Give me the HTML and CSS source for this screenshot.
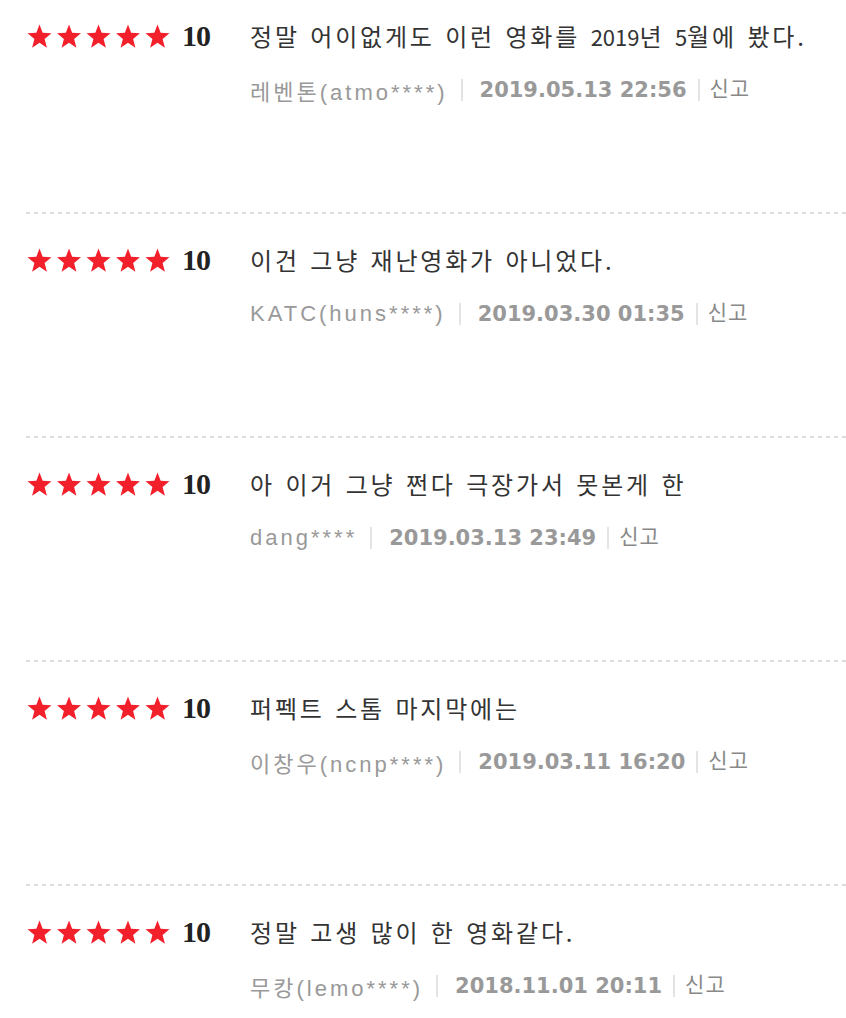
FILE: index.html
```html
<!DOCTYPE html>
<html lang="ko">
<head>
    <meta charset="UTF-8">
    <meta name="viewport" content="width=device-width, initial-scale=1.0">
    <title>관람객 평점</title>
    <link rel="stylesheet" href="styles.css">
</head>
<body>
    <svg class="defs" width="0" height="0">
        <defs>
            <symbol id="star" viewBox="0 0 24 23">
                <polygon points="12,0.5 14.9,8.1 23,8.5 16.7,13.7 18.8,21.8 12,17.3 5.2,21.8 7.3,13.7 1,8.5 9.1,8.1" />
            </symbol>
        </defs>
    </svg>

    <ul class="reviews">
        <li class="review">
            <div class="score">
                <svg class="stars" width="146" height="26" viewBox="0 0 146 26">
                    <use href="#star" x="0" y="1" width="27" height="25" />
                    <use href="#star" x="29.5" y="1" width="27" height="25" />
                    <use href="#star" x="59" y="1" width="27" height="25" />
                    <use href="#star" x="88.5" y="1" width="27" height="25" />
                    <use href="#star" x="118" y="1" width="27" height="25" />
                </svg>
                <em>10</em>
            </div>
            <div class="body">
                <p class="text">정말 어이없게도 이런 영화를 <span class="num">2019</span>년 <span class="num">5</span>월에 봤다.</p>
                <div class="meta">
                    <span class="nick">레벤톤(atmo****)</span>
                    <span class="bar"></span>
                    <span class="date">2019.05.13 22:56</span>
                    <span class="bar short"></span>
                    <a href="#" class="report">신고</a>
                </div>
            </div>
        </li>

        <li class="review">
            <div class="score">
                <svg class="stars" width="146" height="26" viewBox="0 0 146 26">
                    <use href="#star" x="0" y="1" width="27" height="25" />
                    <use href="#star" x="29.5" y="1" width="27" height="25" />
                    <use href="#star" x="59" y="1" width="27" height="25" />
                    <use href="#star" x="88.5" y="1" width="27" height="25" />
                    <use href="#star" x="118" y="1" width="27" height="25" />
                </svg>
                <em>10</em>
            </div>
            <div class="body">
                <p class="text">이건 그냥 재난영화가 아니었다.</p>
                <div class="meta">
                    <span class="nick">KATC(huns****)</span>
                    <span class="bar"></span>
                    <span class="date">2019.03.30 01:35</span>
                    <span class="bar short"></span>
                    <a href="#" class="report">신고</a>
                </div>
            </div>
        </li>

        <li class="review">
            <div class="score">
                <svg class="stars" width="146" height="26" viewBox="0 0 146 26">
                    <use href="#star" x="0" y="1" width="27" height="25" />
                    <use href="#star" x="29.5" y="1" width="27" height="25" />
                    <use href="#star" x="59" y="1" width="27" height="25" />
                    <use href="#star" x="88.5" y="1" width="27" height="25" />
                    <use href="#star" x="118" y="1" width="27" height="25" />
                </svg>
                <em>10</em>
            </div>
            <div class="body">
                <p class="text">아 이거 그냥 쩐다 극장가서 못본게 한</p>
                <div class="meta">
                    <span class="nick">dang****</span>
                    <span class="bar"></span>
                    <span class="date">2019.03.13 23:49</span>
                    <span class="bar short"></span>
                    <a href="#" class="report">신고</a>
                </div>
            </div>
        </li>

        <li class="review">
            <div class="score">
                <svg class="stars" width="146" height="26" viewBox="0 0 146 26">
                    <use href="#star" x="0" y="1" width="27" height="25" />
                    <use href="#star" x="29.5" y="1" width="27" height="25" />
                    <use href="#star" x="59" y="1" width="27" height="25" />
                    <use href="#star" x="88.5" y="1" width="27" height="25" />
                    <use href="#star" x="118" y="1" width="27" height="25" />
                </svg>
                <em>10</em>
            </div>
            <div class="body">
                <p class="text">퍼펙트 스톰 마지막에는</p>
                <div class="meta">
                    <span class="nick">이창우(ncnp****)</span>
                    <span class="bar"></span>
                    <span class="date">2019.03.11 16:20</span>
                    <span class="bar short"></span>
                    <a href="#" class="report">신고</a>
                </div>
            </div>
        </li>

        <li class="review">
            <div class="score">
                <svg class="stars" width="146" height="26" viewBox="0 0 146 26">
                    <use href="#star" x="0" y="1" width="27" height="25" />
                    <use href="#star" x="29.5" y="1" width="27" height="25" />
                    <use href="#star" x="59" y="1" width="27" height="25" />
                    <use href="#star" x="88.5" y="1" width="27" height="25" />
                    <use href="#star" x="118" y="1" width="27" height="25" />
                </svg>
                <em>10</em>
            </div>
            <div class="body">
                <p class="text">정말 고생 많이 한 영화같다.</p>
                <div class="meta">
                    <span class="nick">무캉(lemo****)</span>
                    <span class="bar"></span>
                    <span class="date">2018.11.01 20:11</span>
                    <span class="bar short"></span>
                    <a href="#" class="report">신고</a>
                </div>
            </div>
        </li>
    </ul>
</body>
</html>
```

FILE: styles.css
```css
body {
    font-family: "Noto Sans CJK KR", "Noto Sans", sans-serif;
    margin: 0;
    padding: 0;
    background: #fff;
}

.defs {
    position: absolute;
}

.reviews {
    list-style: none;
    margin: 0;
    padding: 0 0 0 26px;
}

.review {
    display: flex;
    padding: 33px 0 107px;
    background-image: linear-gradient(to right, #dcdcdc 50%, transparent 50%);
    background-size: 8px 2px;
    background-repeat: repeat-x;
    background-position: 0 0;
}

.review:first-child {
    padding-top: 21px;
    background: none;
}

.review:last-child {
    padding-bottom: 0;
}

.score {
    flex: 0 0 224px;
    display: flex;
    align-items: center;
    height: 30px;
}

.stars {
    display: block;
    fill: #f2202b;
}

.score em {
    margin-left: 10px;
    font-family: "Liberation Serif", serif;
    font-style: normal;
    font-weight: bold;
    font-size: 30px;
    line-height: 30px;
    color: #222;
    letter-spacing: -1px;
}

.body {
    flex: 1;
}

.text {
    margin: 0;
    height: 30px;
    line-height: 30px;
    font-size: 24px;
    letter-spacing: 2.8px;
    word-spacing: 1px;
    color: #333;
}

.text .num {
    font-size: 22px;
    letter-spacing: 0;
}

.meta {
    display: flex;
    align-items: center;
    height: 30px;
    margin-top: 24px;
    color: #999;
    font-size: 22px;
}

.nick {
    font-family: "Liberation Sans", "Noto Sans CJK KR", sans-serif;
    letter-spacing: 3px;
}

.bar {
    width: 2px;
    height: 22px;
    margin: 0 17px 0 13px;
    background: #e4e4e4;
}

.bar.short {
    margin: 0 10px 0 11px;
}

.date {
    font-family: "DejaVu Sans", sans-serif;
    font-weight: bold;
    font-size: 21px;
    color: #999;
}

.report {
    color: #888;
    text-decoration: none;
    font-size: 21px;
    letter-spacing: 1px;
    margin-top: -6px;
}
```
